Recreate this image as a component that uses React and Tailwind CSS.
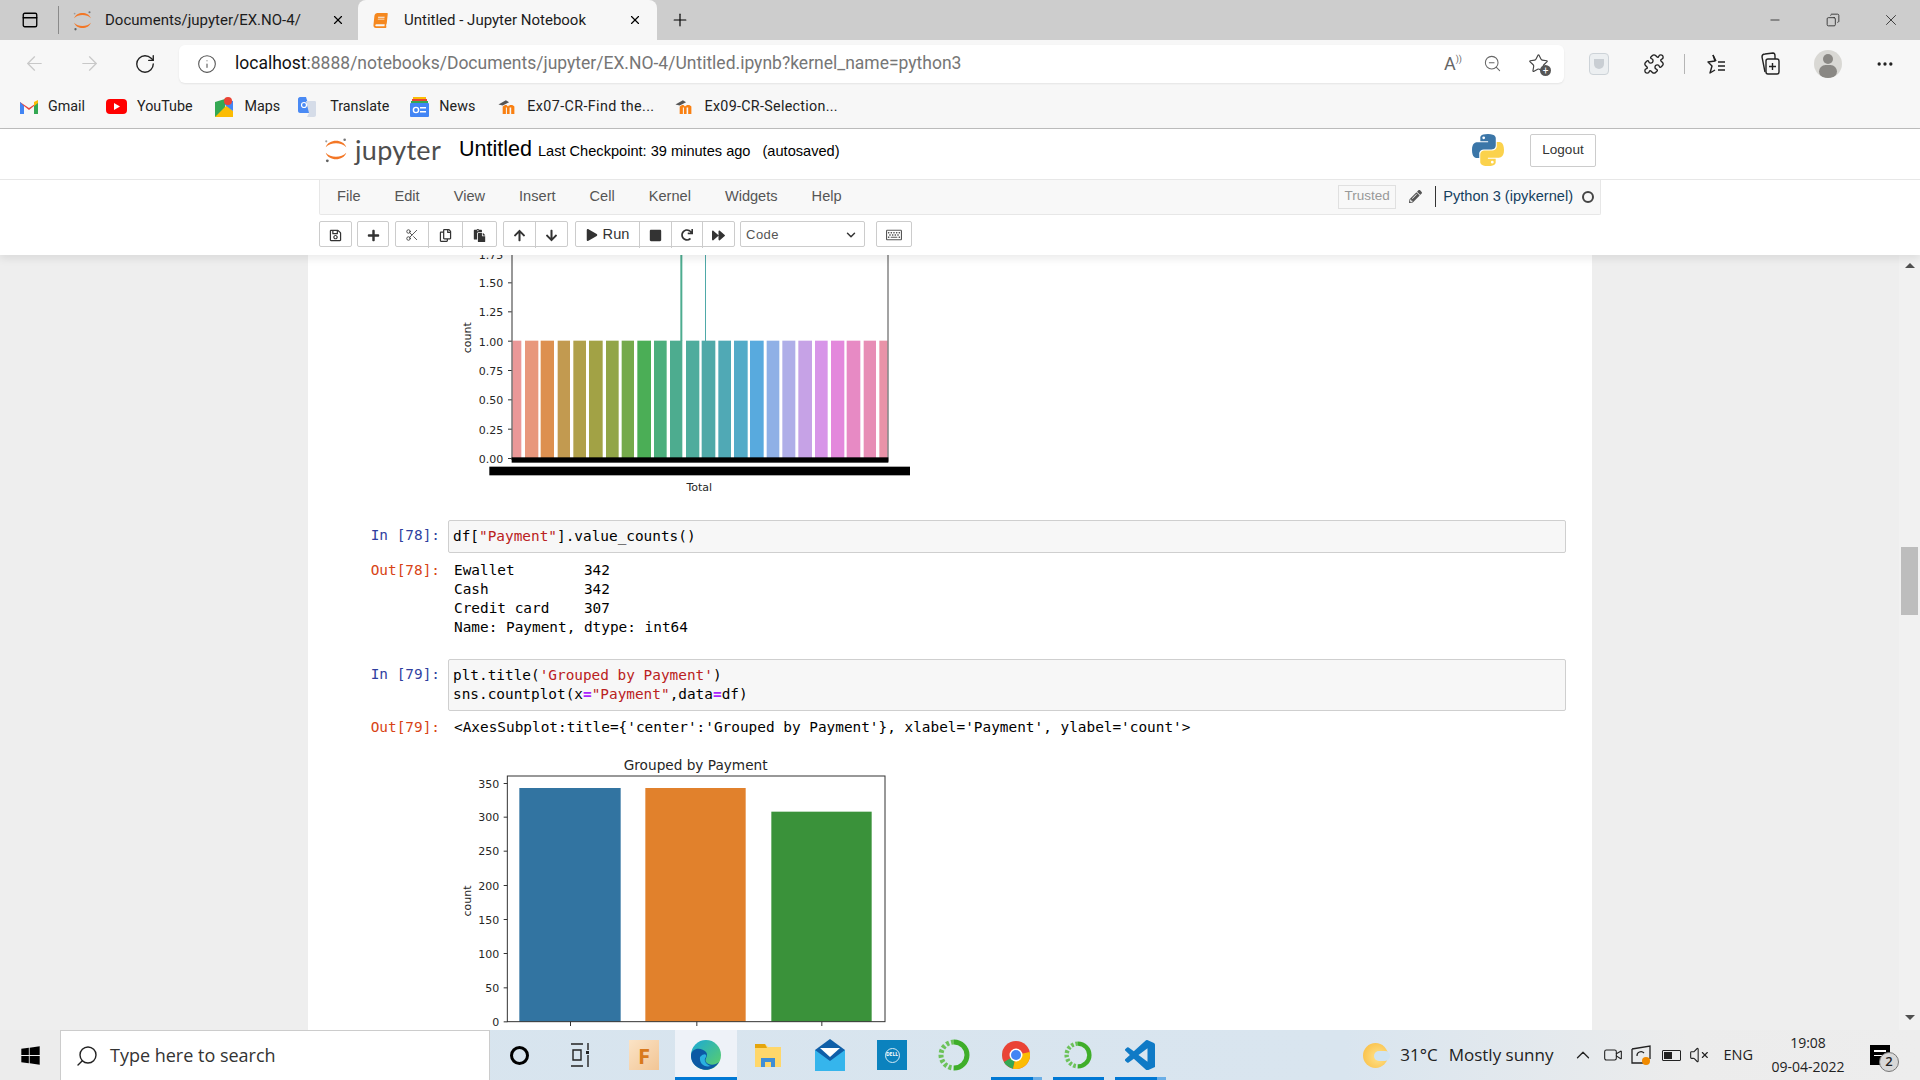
import {
  ArrowLeft,
  ArrowRight,
  RotateCw,
  Info,
  ZoomOut,
  Star,
  Puzzle,
  X,
  Plus,
  Minus,
  Copy,
  ChevronDown,
  ChevronUp,
  Search,
  PanelTop,
  MoreHorizontal,
  Video,
  VolumeX,
  Scissors,
} from "lucide-react";
import {
  FaRegSave,
  FaPlus,
  FaRegCopy,
  FaPaste,
  FaArrowUp,
  FaArrowDown,
  FaPlay,
  FaStop,
  FaRedo,
  FaForward,
  FaRegKeyboard,
  FaPencilAlt,
  FaWindows,
  FaBook,
} from "react-icons/fa";

const JupyterMark = ({ size = 24 }) => (
  <svg width={size} height={size} viewBox="0 0 24 24">
    <path d="M2.5 9.5 C5 1.5 19 1.5 21.5 9.5 C17 4.5 7 4.5 2.5 9.5 Z" fill="#f37726" />
    <path d="M2.5 14.5 C5 22.5 19 22.5 21.5 14.5 C17 19.5 7 19.5 2.5 14.5 Z" fill="#f37726" />
    <circle cx="20" cy="2.5" r="1.2" fill="#767677" />
    <circle cx="3" cy="4" r="1" fill="#9e9e9e" />
    <circle cx="4" cy="22" r="1.3" fill="#616262" />
  </svg>
);

const PythonLogo = () => {
  const d =
    "M54.9 0C26.8 0 28.6 12.2 28.6 12.2l0 12.6h26.8v3.8H17.9S0 26.5 0 54.8s15.6 27.3 15.6 27.3h9.3V69s-.5-15.6 15.4-15.6h26.5s14.9.2 14.9-14.4V14.9S84.1 0 54.9 0zM40.2 8.5a4.8 4.8 0 1 1 0 9.6 4.8 4.8 0 0 1 0-9.6z";
  return (
    <svg width="32" height="32" viewBox="0 0 110 110">
      <path d={d} fill="#3b76a8" fillRule="evenodd" />
      <path d={d} fill="#fbd24c" fillRule="evenodd" transform="rotate(180 55 55)" />
    </svg>
  );
};

const MoodleIcon = () => (
  <svg width="22" height="17" viewBox="0 0 20 16">
    <path d="M1 6 L8 2 L11 4 L5 7 Z" fill="#555" />
    <path d="M5 15 V8 C7 6 9 6 10 8 C11 6 15 6 16 8 V15 H13 V9 H11.5 V15 H9 V9 H8 V15 Z" fill="#f98012" />
  </svg>
);

const bookmarks = [
  {
    label: "Gmail",
    ml: "ml-[20px]",
    gap: "gap-[10px]",
    icon: (
      <svg width="18" height="14" viewBox="0 0 18 14">
        <path d="M0 2 L9 8 L18 2 V14 H14 V6 L9 10 L4 6 V14 H0 Z" fill="#e8453c" />
        <path d="M0 2 V14 H4 V6 Z" fill="#4285f4" />
        <path d="M18 2 V14 H14 V6 Z" fill="#34a853" />
        <path d="M14 2 L18 0 V3 L14 6 Z" fill="#fbbc04" />
      </svg>
    ),
  },
  {
    label: "YouTube",
    ml: "ml-[21px]",
    gap: "gap-[10px]",
    icon: (
      <svg width="21" height="15" viewBox="0 0 21 15">
        <rect width="21" height="15" rx="4" fill="#f00" />
        <path d="M8 4 L14 7.5 L8 11 Z" fill="#fff" />
      </svg>
    ),
  },
  {
    label: "Maps",
    ml: "ml-[22px]",
    gap: "gap-[12px]",
    icon: (
      <svg width="18" height="20" viewBox="0 0 18 20">
        <path d="M0 5 L10 2 V18 L0 20 Z" fill="#34a853" />
        <path d="M0 20 L12 8 L18 14 V20 Z" fill="#fbbc04" />
        <path d="M10 2 L18 4 V14 L10 8 Z" fill="#4285f4" />
        <circle cx="13" cy="4" r="4" fill="#ea4335" />
      </svg>
    ),
  },
  {
    label: "Translate",
    ml: "ml-[18px]",
    gap: "gap-[14px]",
    icon: (
      <svg width="18" height="20" viewBox="0 0 18 20">
        <path d="M0 2 C0 1 1 0 2 0 H8 L13 16 H2 C1 16 0 15 0 14 Z" fill="#4a8af4" />
        <path d="M8 4 H17 C18 4 18 5 18 6 V18 C18 19 17 20 16 20 H9 L11 16 Z" fill="#d5dce8" />
        <circle cx="6" cy="8" r="2.5" fill="none" stroke="#fff" strokeWidth="1.2" />
      </svg>
    ),
  },
  {
    label: "News",
    ml: "ml-[21px]",
    gap: "gap-[10px]",
    icon: (
      <svg width="19" height="20" viewBox="0 0 19 20">
        <path d="M3 0 H16 V6 H3 Z" fill="#fbbc04" />
        <path d="M2 2 H17 V6 H2 Z" fill="#ea4335" />
        <path d="M1 4 H18 V8 H1 Z" fill="#34a853" />
        <rect y="6" width="19" height="14" rx="1" fill="#4285f4" />
        <rect x="10" y="10" width="6" height="1.5" fill="#fff" />
        <rect x="10" y="14" width="6" height="1.5" fill="#fff" />
        <circle cx="6" cy="13" r="2.6" fill="none" stroke="#fff" strokeWidth="1.4" />
      </svg>
    ),
  },
  { label: "Ex07-CR-Find the...", ml: "ml-[22px]", gap: "gap-[8px]", text: "tracking-[0.4px]", icon: <MoodleIcon /> },
  { label: "Ex09-CR-Selection...", ml: "ml-[19px]", gap: "gap-[9px]", text: "tracking-[0.3px]", icon: <MoodleIcon /> },
];

const TabStrip = () => (
  <div className="flex h-10 shrink-0 items-center bg-[#cdcdcd] text-[15px] text-[#1c1c1c]">
    <PanelTop className="ml-[21px] h-[18px] w-[18px] text-black" strokeWidth={1.8} />
    <div className="ml-[19px] h-[28px] w-px bg-[#8a8a8a]" />
    <div className="flex h-10 w-[298px] items-center">
      <div className="ml-[13px]">
        <JupyterMark size={21} />
      </div>
      <span className="ml-[12px] w-[226px] truncate">Documents/jupyter/EX.NO-4/</span>
      <X className="h-[14px] w-[14px] text-black" />
    </div>
    <div className="ml-px flex h-10 w-[299px] items-center rounded-t-lg bg-[#f7f7f7]">
      <FaBook className="ml-[15px] h-[15px] w-[15px] -skew-x-6 text-[#f5881f]" />
      <span className="ml-[16px] w-[224px] truncate">Untitled - Jupyter Notebook</span>
      <X className="h-[14px] w-[14px] text-black" />
    </div>
    <Plus className="ml-[13px] h-[20px] w-[20px] text-black" strokeWidth={1.4} />
    <div className="ml-auto flex items-center">
      <Minus className="h-[14px] w-[14px] text-[#222]" strokeWidth={1.4} />
      <Copy className="ml-[44px] h-[14px] w-[14px] -scale-x-100 text-[#222]" strokeWidth={1.4} />
      <X className="ml-[42px] mr-[20px] h-[18px] w-[18px] text-[#222]" strokeWidth={1.1} />
    </div>
  </div>
);

const AddressBar = () => (
  <div className="flex h-[45px] shrink-0 items-center bg-[#f7f7f7] pt-[2px]">
    <ArrowLeft className="ml-[23px] h-[23px] w-[23px] text-[#c8c8c8]" strokeWidth={1.3} />
    <ArrowRight className="ml-[32px] h-[23px] w-[23px] text-[#c8c8c8]" strokeWidth={1.3} />
    <RotateCw className="ml-[33px] h-[22px] w-[22px] text-[#222]" strokeWidth={1.5} />
    <div className="ml-[23px] flex h-[38px] w-[1385px] items-center rounded-md bg-white shadow-[0_1px_2px_rgba(0,0,0,0.08)]">
      <Info className="ml-[18px] h-[20px] w-[20px] text-[#555]" strokeWidth={1.3} />
      <span className="ml-[18px] whitespace-nowrap text-[17.5px] text-[#767676]">
        <span className="text-[#111]">localhost</span>:8888/notebooks/Documents/jupyter/EX.NO-4/Untitled.ipynb?kernel_name=python3
      </span>
      <div className="ml-auto flex items-center">
        <span className="text-[18px] text-[#666]">A</span>
        <span className="mb-2 text-[9px] text-[#666]">))</span>
        <ZoomOut className="ml-[21px] h-[19px] w-[19px] text-[#666]" strokeWidth={1.3} />
        <div className="relative ml-[26px] mr-[15px] h-[21px] w-[21px]">
          <Star className="h-[21px] w-[21px] text-[#444]" strokeWidth={1.3} />
          <div className="absolute -bottom-[2px] -right-[2px] flex h-[11px] w-[11px] items-center justify-center rounded-full bg-[#555] text-[10px] leading-none text-white">
            +
          </div>
        </div>
      </div>
    </div>
    <div className="ml-[25px] flex h-[22px] w-[20px] items-center justify-center rounded-sm border border-[#cdd3d8] bg-[#eceff1]">
      <div className="h-[10px] w-[10px] rounded-b-md bg-[#c9ced3]" />
    </div>
    <Puzzle className="ml-[34px] h-[22px] w-[22px] text-[#222]" strokeWidth={1.5} />
    <div className="ml-[19px] h-[20px] w-px bg-[#b5b5b5]" />
    <svg width="22" height="22" viewBox="0 0 22 22" className="ml-[20px]">
      <path d="M8 2 L10 8 L3 9 L7 13 L5 20 L10 17" fill="none" stroke="#222" strokeWidth="1.4" strokeLinejoin="round" />
      <path d="M8 2 L11 8 M13 9 H20 M13 13 H20 M13 17 H20" fill="none" stroke="#222" strokeWidth="1.4" />
    </svg>
    <svg width="22" height="24" viewBox="0 0 22 24" className="ml-[32px]">
      <path d="M6 20 L3 5 C3 3 4 2 6 2 L14 1 C15 1 16 2 16 4 V7" fill="none" stroke="#222" strokeWidth="1.4" />
      <rect x="7" y="7" width="13" height="15" rx="2" fill="none" stroke="#222" strokeWidth="1.4" />
      <path d="M13.5 11 V18 M10 14.5 H17" stroke="#222" strokeWidth="1.4" />
    </svg>
    <div className="ml-[33px] flex h-[28px] w-[28px] flex-col items-center overflow-hidden rounded-full bg-[#d9d8d4]">
      <div className="mt-[4px] h-[12px] w-[10px] rounded-full bg-[#8a8884]" />
      <div className="mt-[1px] h-[14px] w-[18px] rounded-full bg-[#8a8884]" />
    </div>
    <MoreHorizontal className="ml-[33px] h-[20px] w-[20px] text-[#222]" strokeWidth={2} />
  </div>
);

const BookmarkBar = () => (
  <div className="flex h-[44px] shrink-0 items-center border-b border-[#bdbdbd] bg-[#f7f7f7] text-[14.3px] text-[#222]">
    {bookmarks.map((item) => (
      <div key={item.label} className={`flex items-center ${item.ml} ${item.gap}`}>
        {item.icon}
        <span className={item.text}>{item.label}</span>
      </div>
    ))}
  </div>
);

const ToolButton = ({ children, className = "" }) => (
  <div className={`flex h-[26px] items-center justify-center border-r border-[#cccccc] last:border-r-0 ${className}`}>
    {children}
  </div>
);

const ToolGroup = ({ children, className = "" }) => (
  <div className={`flex h-[26px] items-stretch rounded-[2px] border border-[#cccccc] bg-white text-[#333] ${className}`}>
    {children}
  </div>
);

const menus = ["File", "Edit", "View", "Insert", "Cell", "Kernel", "Widgets", "Help"];

const NotebookHeader = () => (
  <div className="z-10 flex h-[126px] shrink-0 flex-col bg-white font-['Liberation_Sans',sans-serif] text-[14.6px] shadow-[0_4px_8px_rgba(0,0,0,0.08)]">
    <div className="flex h-[51px] items-center border-b border-[#e7e7e7] pb-[8px] pl-[323px]">
      <JupyterMark size={26} />
      <span className="ml-[6px] -mt-[2px] font-['Lato',sans-serif] text-[27px] leading-none tracking-[0.3px] text-[#4e4e4e]">
        jupyter
      </span>
      <span className="ml-[18px] -mt-[1px] text-[21.5px] text-black">Untitled</span>
      <span className="ml-[6px] pt-[3px] text-black">Last Checkpoint: 39 minutes ago</span>
      <span className="ml-[12px] pt-[3px] text-black">(autosaved)</span>
      <div className="ml-auto flex items-center">
        <PythonLogo />
        <div className="ml-[26px] mr-[324px] flex h-[33px] w-[66px] items-center justify-center rounded-[2px] border border-[#cccccc] text-[13.5px] text-[#333]">
          Logout
        </div>
      </div>
    </div>

    <div className="ml-[319px] flex h-[35px] w-[1282px] items-center rounded-b-[2px] border-x border-b border-[#e7e7e7] bg-[#f8f8f8] pb-[1px] pl-[17px] text-[#555]">
      <div className="flex gap-[34px]">
        {menus.map((menu) => (
          <span key={menu}>{menu}</span>
        ))}
      </div>
      <div className="ml-auto flex items-center">
        <div className="flex h-[24px] w-[58px] items-center justify-center border border-[#e0e0e0] text-[13.5px] text-[#999]">
          Trusted
        </div>
        <FaPencilAlt className="ml-[13px] h-[13px] w-[13px] text-[#555]" />
        <div className="ml-[13px] h-[21px] w-px bg-[#333]" />
        <span className="ml-[7px] text-[#14405f]">Python 3 (ipykernel)</span>
        <div className="ml-[9px] mr-[6px] h-[12px] w-[12px] rounded-full border-2 border-[#444]" />
      </div>
    </div>

    <div className="ml-[319px] mt-[6px] flex items-center text-[13px]">
      <ToolGroup className="w-[33px]">
        <ToolButton className="w-full">
          <FaRegSave />
        </ToolButton>
      </ToolGroup>
      <ToolGroup className="ml-[5px] w-[32px]">
        <ToolButton className="w-full">
          <FaPlus />
        </ToolButton>
      </ToolGroup>
      <ToolGroup className="ml-[6px] w-[102px]">
        <ToolButton className="w-[33px]">
          <Scissors className="h-[14px] w-[14px]" strokeWidth={1.4} />
        </ToolButton>
        <ToolButton className="w-[34px]">
          <FaRegCopy />
        </ToolButton>
        <ToolButton className="w-[33px]">
          <FaPaste />
        </ToolButton>
      </ToolGroup>
      <ToolGroup className="ml-[6px] w-[65px]">
        <ToolButton className="w-[32px]">
          <FaArrowUp />
        </ToolButton>
        <ToolButton className="w-[32px]">
          <FaArrowDown />
        </ToolButton>
      </ToolGroup>
      <ToolGroup className="ml-[7px] w-[160px]">
        <ToolButton className="w-[64px] gap-[5px] text-[14.6px]">
          <FaPlay className="h-[12px] w-[12px]" />
          Run
        </ToolButton>
        <ToolButton className="w-[32px]">
          <FaStop />
        </ToolButton>
        <ToolButton className="w-[31px]">
          <FaRedo className="h-[12px] w-[12px]" />
        </ToolButton>
        <ToolButton className="w-[31px]">
          <FaForward />
        </ToolButton>
      </ToolGroup>
      <div className="ml-[5px] flex h-[26px] w-[125px] items-center rounded-[2px] border border-[#cccccc] bg-white pl-[5px] pt-[2px] text-[13px] tracking-[0.5px] text-[#555]">
        Code
        <ChevronDown className="ml-auto mr-[6px] h-[14px] w-[14px] text-[#333]" strokeWidth={2.5} />
      </div>
      <ToolGroup className="ml-[11px] w-[36px]">
        <ToolButton className="w-full">
          <FaRegKeyboard className="h-[16px] w-[16px] text-[#555]" />
        </ToolButton>
      </ToolGroup>
    </div>
  </div>
);

// coordinates below are 3x the picture, taken from zoomed crops
const countBars = [
  [187, 214, "#ea9898"], [225, 265, "#e8977c"], [272, 312, "#dd9050"], [323, 360, "#c29a50"],
  [370, 408, "#b0a04a"], [417, 458, "#a2a245"], [468, 506, "#92a548"], [515, 552, "#75aa4b"],
  [562, 603, "#4bae56"], [612, 650, "#4caf7d"], [660, 697, "#4dac8f"], [708, 748, "#4fac9d"],
  [755, 796, "#4fa9a8"], [805, 843, "#50a9b5"], [852, 893, "#53abc8"], [900, 941, "#58aade"],
  [950, 988, "#8fb0e6"], [997, 1036, "#afaee8"], [1045, 1086, "#c6a2e6"], [1095, 1133, "#d795e8"],
  [1143, 1183, "#e388dc"], [1190, 1231, "#e78ac4"], [1241, 1278, "#e78db5"], [1288, 1313, "#e993a8"],
];

const totalTicks = [
  ["1.50", 98], ["1.25", 185], ["1.00", 273], ["0.75", 361], ["0.50", 449], ["0.25", 537], ["0.00", 625], ["1.75", 12],
];

const TotalChart = () => (
  <svg width="480" height="245" viewBox="0 15 1440 735" className="ml-[142px] block shrink-0 font-['DejaVu_Sans',sans-serif]">
    <rect x="691" y="15" width="6" height="258" fill="#4dac8f" />
    <rect x="765" y="15" width="3" height="258" fill="#4fa9a8" />
    {countBars.map(([x1, x2, color]) => (
      <rect key={x1} x={x1} y="272" width={x2 - x1} height="353" fill={color} />
    ))}
    <rect x="184" y="15" width="4" height="615" fill="#666" />
    <rect x="1312" y="15" width="4" height="620" fill="#777" />
    {totalTicks.map(([label, y]) => (
      <g key={label}>
        <rect x="174" y={y - 1} width="11" height="3" fill="#333" />
        <text x="160" y={y + 14} textAnchor="end" fontSize="33" fill="#262626">
          {label}
        </text>
      </g>
    ))}
    <text transform="translate(62 263) rotate(-90)" textAnchor="middle" fontSize="33" fill="#262626">
      count
    </text>
    <rect x="185" y="622" width="1130" height="16" fill="#000" />
    <rect x="118" y="650" width="1262" height="26" fill="#000" />
    <text x="748" y="722" textAnchor="middle" fontSize="33" fill="#262626">
      Total
    </text>
  </svg>
);

const paymentBars = [
  [208, 512, 144, "#3274a1"],
  [586, 887, 144, "#e1812c"],
  [964, 1265, 215, "#3a923a"],
];

const paymentTicks = [
  ["350", 130], ["300", 231], ["250", 333], ["200", 436], ["150", 538], ["100", 640], ["50", 743], ["0", 845],
];

const PaymentChart = () => (
  <svg width="480" height="300" viewBox="0 0 1440 900" className="ml-[142px] mt-[3px] block shrink-0 font-['DejaVu_Sans',sans-serif]">
    <text x="737" y="90" textAnchor="middle" fontSize="41" fill="#262626">
      Grouped by Payment
    </text>
    {paymentBars.map(([x1, x2, y, color]) => (
      <rect key={x1} x={x1} y={y} width={x2 - x1} height={845 - y} fill={color} />
    ))}
    <rect x="172" y="108" width="1133" height="737" fill="none" stroke="#333" strokeWidth="3" />
    {paymentTicks.map(([label, y]) => (
      <g key={label}>
        <rect x="161" y={y - 1} width="11" height="3" fill="#333" />
        <text x="148" y={y + 13} textAnchor="end" fontSize="33" fill="#262626">
          {label}
        </text>
      </g>
    ))}
    {[361, 740, 1115].map((x) => (
      <rect key={x} x={x - 1} y="845" width="3" height="13" fill="#333" />
    ))}
    <text transform="translate(62 483) rotate(-90)" textAnchor="middle" fontSize="33" fill="#262626">
      count
    </text>
  </svg>
);

const Prompt = ({ kind, n }) => (
  <div className={`w-[140px] shrink-0 whitespace-pre pr-[8px] text-right ${kind === "In" ? "text-[#303f9f]" : "text-[#d84315]"}`}>
    {kind === "In" ? `In [${n}]:` : `Out[${n}]:`}
  </div>
);

const Str = ({ children }) => <span className="text-[#ba2121]">{children}</span>;
const Op = ({ children }) => <span className="font-bold text-[#aa22ff]">{children}</span>;

const InputCell = ({ n, children, className = "" }) => (
  <div className={`flex ${className}`}>
    <div className="pt-[6px]">
      <Prompt kind="In" n={n} />
    </div>
    <div className="w-[1118px] rounded-[2px] border border-[#cfcfcf] bg-[#f7f7f7] px-[4px] py-[6px] whitespace-pre text-black">
      {children}
    </div>
  </div>
);

const NotebookBody = () => (
  <div className="flex min-h-0 flex-1 overflow-hidden bg-[#eeeeee]">
    <div className="ml-[308px] flex h-[1000px] w-[1284px] flex-col bg-white font-['DejaVu_Sans_Mono',monospace] text-[14.4px] leading-[19px]">
      <TotalChart />
      <InputCell n={78} className="mt-[20px]">
        df[<Str>"Payment"</Str>].value_counts()
      </InputCell>
      <div className="mt-[8px] flex">
        <Prompt kind="Out" n={78} />
        <div className="pl-[6px] whitespace-pre text-black">
          {"Ewallet        342\nCash           342\nCredit card    307\nName: Payment, dtype: int64"}
        </div>
      </div>
      <InputCell n={79} className="mt-[22px]">
        {"plt.title("}
        <Str>'Grouped by Payment'</Str>
        {")\nsns.countplot(x"}
        <Op>=</Op>
        <Str>"Payment"</Str>
        {",data"}
        <Op>=</Op>
        df)
      </InputCell>
      <div className="mt-[7px] flex">
        <Prompt kind="Out" n={79} />
        <div className="pl-[6px] whitespace-pre text-black">
          {"<AxesSubplot:title={'center':'Grouped by Payment'}, xlabel='Payment', ylabel='count'>"}
        </div>
      </div>
      <PaymentChart />
    </div>
    <div className="ml-auto flex w-[21px] flex-col items-center bg-[#f1f1f1]">
      <div className="mt-[8px] h-0 w-0 border-x-[5px] border-b-[5px] border-x-transparent border-b-[#505050]" />
      <div className="mt-[279px] h-[68px] w-[17px] bg-[#bdbdbd]" />
      <div className="mt-auto mb-[10px] h-0 w-0 border-x-[5px] border-t-[5px] border-x-transparent border-t-[#505050]" />
    </div>
  </div>
);

const TaskSlot = ({ children, bar, split, active }) => (
  <div className={`relative flex h-[50px] w-[62px] items-center justify-center ${active ? "bg-[#eef2f8]" : ""}`}>
    {children}
    {bar && (
      <div className={`absolute bottom-0 flex h-[3px] bg-[#0078d4] ${active ? "w-full" : "w-[51px]"}`}>
        {split && <div className="ml-auto h-full w-[9px] bg-[#6aaee6]" />}
      </div>
    )}
  </div>
);

const GreenRing = ({ size }) => (
  <svg width={size} height={size} viewBox="0 0 32 32">
    <path d="M16 3 A13 13 0 1 1 16 29" fill="none" stroke="#3fae2a" strokeWidth="5" />
    <path d="M16 3 A13 13 0 0 0 16 29" fill="none" stroke="#6cc25a" strokeWidth="5" strokeDasharray="3 2" />
  </svg>
);

const Taskbar = () => (
  <div className="flex h-[50px] shrink-0 items-center bg-[linear-gradient(90deg,#d7e4ee_0%,#d9e5ef_70%,#ececec_88%,#ededed_100%)] font-['Open_Sans',sans-serif] text-[#222]">
    <div className="flex h-[50px] w-[60px] items-center justify-center bg-[#ececec]">
      <FaWindows className="h-[21px] w-[21px] text-black" />
    </div>
    <div className="flex h-[50px] w-[430px] items-center border-x border-t border-[#cccccc] bg-white">
      <Search className="ml-[14px] h-[24px] w-[24px] -scale-x-100 text-[#222]" strokeWidth={1.4} />
      <span className="ml-[11px] text-[18px] text-[#333]">Type here to search</span>
    </div>
    <div className="ml-[20px] h-[19px] w-[19px] rounded-full border-[3px] border-black" />
    <svg width="20" height="26" viewBox="0 0 20 26" className="ml-[41px]">
      <path d="M1 2 H13 M1 24 H13 M3 8 H11 V18 H3 Z M18 1 V8 M18 13 V25" fill="none" stroke="#222" strokeWidth="1.4" />
      <rect x="16" y="9" width="3" height="3" fill="#222" />
    </svg>
    <div className="ml-[39px] flex h-[30px] w-[30px] items-center justify-center bg-[linear-gradient(135deg,#fbe3c6,#f2c595)] text-[22px] font-bold text-[#d9791c]">
      F
    </div>
    <div className="ml-[16px] flex">
      <TaskSlot active bar>
        <svg width="32" height="32" viewBox="0 0 32 32">
          <defs>
            <linearGradient id="edgeTop" x1="0" y1="0" x2="1" y2="1">
              <stop offset="0" stopColor="#1aa8d8" />
              <stop offset="1" stopColor="#5fd163" />
            </linearGradient>
          </defs>
          <circle cx="16" cy="16" r="15" fill="url(#edgeTop)" />
          <path d="M1 17 C1 8 12 8 16 13 C19 17 14 20 16 23 C19 27 26 26 29 23 C25 30 16 33 9 29 C3 26 1 21 1 17 Z" fill="#0c59a4" />
          <path d="M10 18 C14 14 17 15 16 18 C13 21 16 26 21 27 C14 29 9 24 10 18 Z" fill="#2ab0e0" />
        </svg>
      </TaskSlot>
      <TaskSlot>
        <svg width="28" height="28" viewBox="0 0 28 28">
          <path d="M1 3 H11 L14 6 H27 V26 H1 Z" fill="#ffd76a" />
          <path d="M1 3 H11 L13 7 H1 Z" fill="#e5a50c" />
          <path d="M7 26 V17 H21 V26 H17 V21 H11 V26 Z" fill="#3f8ed6" />
        </svg>
      </TaskSlot>
      <TaskSlot>
        <svg width="30" height="32" viewBox="0 0 30 32">
          <path d="M0 11 L15 0 L30 11 V32 H0 Z" fill="#0f5fa8" />
          <path d="M5 9 H25 L15 18 Z" fill="#fff" />
          <path d="M0 11 L15 22 L30 11 V32 H0 Z" fill="#35b5ec" />
        </svg>
      </TaskSlot>
      <TaskSlot>
        <div className="flex h-[30px] w-[30px] items-center justify-center bg-[#0b82be]">
          <div className="flex h-[15px] w-[15px] items-center justify-center rounded-full border border-[#d5eaf5] text-[5px] font-bold text-white">
            DELL
          </div>
        </div>
      </TaskSlot>
      <TaskSlot>
        <GreenRing size={32} />
      </TaskSlot>
      <TaskSlot bar split>
        <svg width="28" height="28" viewBox="0 0 28 28">
          <circle cx="14" cy="14" r="14" fill="#ea4335" />
          <path d="M14 14 L2 21 A14 14 0 0 1 2 7 Z M2 7 A14 14 0 0 0 11 27.7 L14 14 Z" fill="#34a853" />
          <path d="M14 14 L27.7 11 A14 14 0 0 1 11 27.7 Z" fill="#fbbc04" />
          <circle cx="14" cy="14" r="6.5" fill="#fff" />
          <circle cx="14" cy="14" r="5" fill="#4285f4" />
        </svg>
      </TaskSlot>
      <TaskSlot bar>
        <GreenRing size={28} />
      </TaskSlot>
      <TaskSlot bar split>
        <svg width="30" height="30" viewBox="0 0 100 100">
          <path
            d="M74.9 99.6a6 6 0 0 0 4.8-.2l20.6-9.9A6.2 6.2 0 0 0 100 84V16a6.2 6.2 0 0 0-3.5-5.6L76 .6a6.2 6.2 0 0 0-7 1.2L29.4 37.9 12.2 24.8a4.2 4.2 0 0 0-5.3.2l-5.5 5a4.2 4.2 0 0 0 0 6.2L16.3 50 1.4 63.7a4.2 4.2 0 0 0 0 6.2l5.5 5a4.2 4.2 0 0 0 5.3.2l17.2-13 39.5 36a6.2 6.2 0 0 0 6 1.5zM75 27.3 45 50l30 22.7z"
            fill="#0f7ac6"
            fillRule="evenodd"
          />
        </svg>
      </TaskSlot>
    </div>

    <div className="ml-auto flex items-center text-[#222]">
      <div className="relative h-[25px] w-[25px] rounded-full bg-[radial-gradient(circle_at_60%_55%,#ffe28a,#f9b93a)]">
        <div className="absolute right-[-2px] top-[8px] h-[10px] w-[16px] rounded-full bg-[#cfe3f2]" />
      </div>
      <span className="ml-[12px] text-[17px]">31°C</span>
      <span className="ml-[11px] text-[17px]">Mostly sunny</span>
      <ChevronUp className="ml-[19px] h-[22px] w-[22px]" strokeWidth={1.4} />
      <Video className="ml-[9px] h-[20px] w-[20px]" strokeWidth={1.3} />
      <svg width="20" height="20" viewBox="0 0 20 20" className="ml-[8px]">
        <path d="M1 4 L19 1 V14 M1 4 V18 H12" fill="none" stroke="#222" strokeWidth="1.3" />
        <circle cx="15" cy="16" r="4" fill="#f08a00" />
        <path d="M6 11 A4 4 0 0 1 13 8" fill="none" stroke="#222" strokeWidth="1.2" />
      </svg>
      <div className="ml-[11px] flex h-[11px] w-[19px] items-center rounded-[1px] border border-[#222] p-px">
        <div className="h-full w-[8px] bg-[#222]" />
      </div>
      <VolumeX className="ml-[8px] h-[20px] w-[20px]" strokeWidth={1.3} />
      <span className="ml-[14px] text-[14.5px]">ENG</span>
      <div className="ml-[17px] flex w-[76px] flex-col items-center text-[14px] leading-[24px]">
        <span>19:08</span>
        <span>09-04-2022</span>
      </div>
      <div className="relative ml-[24px] mr-[30px] h-[20px] w-[20px] bg-black">
        <div className="mx-[4px] mt-[5px] h-[1.5px] bg-white" />
        <div className="mx-[4px] mt-[3px] h-[1.5px] bg-white" />
        <div className="absolute -bottom-[7px] -right-[9px] flex h-[20px] w-[20px] items-center justify-center rounded-full border border-[#777] bg-[#d8d8d8] text-[13px] font-semibold">
          2
        </div>
      </div>
    </div>
  </div>
);

const App = () => (
  <div className="flex h-[1080px] w-[1920px] flex-col overflow-hidden font-['Roboto',sans-serif]">
    <TabStrip />
    <AddressBar />
    <BookmarkBar />
    <NotebookHeader />
    <NotebookBody />
    <Taskbar />
  </div>
);

export default App;
